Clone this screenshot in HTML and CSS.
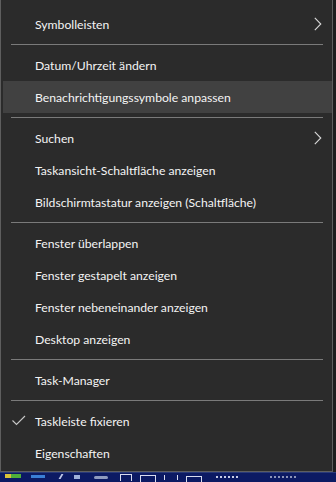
FILE: index.html
```html
<!DOCTYPE html>
<html lang="de">
<head>
<meta charset="utf-8">
<link rel="stylesheet" href="styles.css">
</head>
<body>
<div class="screen">
  <div class="menu">
    <div class="item"><span class="label">Symbolleisten</span>
      <svg class="chev" width="8" height="14" viewBox="0 0 8 14"><path d="M0.8 0.8 L6.8 7 L0.8 13.2" fill="none" stroke="#d8d8d8" stroke-width="1.1"/></svg>
    </div>
    <div class="sep"></div>
    <div class="item"><span class="label">Datum/Uhrzeit ändern</span></div>
    <div class="item hover"><span class="label">Benachrichtigungssymbole anpassen</span></div>
    <div class="sep"></div>
    <div class="item"><span class="label">Suchen</span>
      <svg class="chev" width="8" height="14" viewBox="0 0 8 14"><path d="M0.8 0.8 L6.8 7 L0.8 13.2" fill="none" stroke="#d8d8d8" stroke-width="1.1"/></svg>
    </div>
    <div class="item"><span class="label">Taskansicht-Schaltfläche anzeigen</span></div>
    <div class="item"><span class="label">Bildschirmtastatur anzeigen (Schaltfläche)</span></div>
    <div class="sep"></div>
    <div class="item"><span class="label">Fenster überlappen</span></div>
    <div class="item"><span class="label">Fenster gestapelt anzeigen</span></div>
    <div class="item"><span class="label">Fenster nebeneinander anzeigen</span></div>
    <div class="item"><span class="label">Desktop anzeigen</span></div>
    <div class="sep"></div>
    <div class="item"><span class="label">Task-Manager</span></div>
    <div class="sep"></div>
    <div class="item">
      <svg class="check" width="14" height="11" viewBox="0 0 14 11"><path d="M0.5 5.5 L4.5 9.5 L13 1" fill="none" stroke="#c8c8c8" stroke-width="1.1"/></svg>
      <span class="label">Taskleiste fixieren</span>
    </div>
    <div class="item"><span class="label">Eigenschaften</span></div>
  </div>
  <div class="taskbar">
    <span class="ti ti-green"></span>
    <span class="ti ti-blue"></span>
    <span class="ti ti-slash"></span>
    <span class="ti ti-slash2"></span>
    <span class="ti ti-grey"></span>
    <span class="ti ti-box"></span>
    <span class="ti ti-box2"></span>
    <span class="ti ti-spk"></span>
    <span class="ti ti-box3"></span>
    <span class="ti ti-txt"></span>
    <span class="ti ti-time"></span>
  </div>
</div>
</body>
</html>
```

FILE: styles.css
```css
html, body {
  margin: 0;
  padding: 0;
  background: #1e1e1e;
}
.screen {
  width: 336px;
  height: 482px;
  overflow: hidden;
  display: flex;
  flex-direction: column;
  background: #1e1e1e;
}
.menu {
  width: 331px;
  background: #2b2b2b;
  border-left: 1px solid #5e5e5e;
  border-right: 1px solid #5e5e5e;
  border-bottom: 1px solid #5e5e5e;
  padding: 8px 0 2px 0;
  display: flex;
  flex-direction: column;
  font-family: Lato, "Liberation Sans", sans-serif;
  font-size: 12.2px;
  color: #f4f4f4;
}
.item {
  height: 32px;
  display: flex;
  align-items: center;
  padding-left: 32px;
  padding-right: 10px;
  margin-left: 2px;
  position: relative;
}
.item.hover {
  background: #414141;
}
.label {
  flex: 1;
  white-space: nowrap;
}
.chev {
  flex: none;
}
.check {
  position: absolute;
  left: 9px;
  top: 10px;
}
.sep {
  height: 9px;
  display: flex;
  align-items: flex-start;
}
.sep::before {
  content: "";
  display: block;
  margin: 4px 9px 0 10px;
  flex: 1;
  height: 1px;
  background: #7a7a7a;
}
.taskbar {
  flex: 1;
  background: #0c1a63;
  display: flex;
  align-items: flex-start;
  padding-left: 5px;
  border-top: 1px solid #2a3a7a;
}
.ti {
  display: block;
  flex: none;
}
.ti-green { width: 16px; height: 4px; background: linear-gradient(90deg, #d9c23a 0 35%, #4fae3a 35% 100%); margin-top: 1px; }
.ti-blue { width: 14px; height: 3px; background: #3a7fd6; margin-left: 10px; margin-top: 2px; }
.ti-slash { width: 2px; height: 5px; background: #c0c8e8; margin-left: 15px; margin-top: 1px; transform: skewX(-30deg); }
.ti-slash2 { width: 6px; height: 4px; background: #9fb0d8; margin-left: 12px; margin-top: 2px; }
.ti-grey { width: 14px; height: 3px; background: #8f9bbf; margin-left: 14px; margin-top: 3px; border-radius: 2px; }
.ti-box { width: 10px; height: 6px; border: 1px solid #d8dcef; border-bottom: 0; margin-left: 12px; margin-top: 1px; }
.ti-box2 { width: 14px; height: 6px; border: 1px solid #d8dcef; border-bottom: 0; margin-left: 8px; margin-top: 2px; }
.ti-spk { width: 12px; height: 5px; border-left: 1px solid #d8dcef; border-right: 1px solid #d8dcef; margin-left: 8px; margin-top: 2px; }
.ti-box3 { width: 14px; height: 5px; border: 1px solid #d8dcef; border-bottom: 0; margin-left: 8px; margin-top: 3px; }
.ti-txt { width: 22px; height: 3px; border-top: 2px dotted #c8cde6; margin-left: 14px; margin-top: 3px; }
.ti-time { width: 26px; height: 3px; border-top: 2px dotted #8c94b8; margin-left: 32px; margin-top: 3px; }
```
